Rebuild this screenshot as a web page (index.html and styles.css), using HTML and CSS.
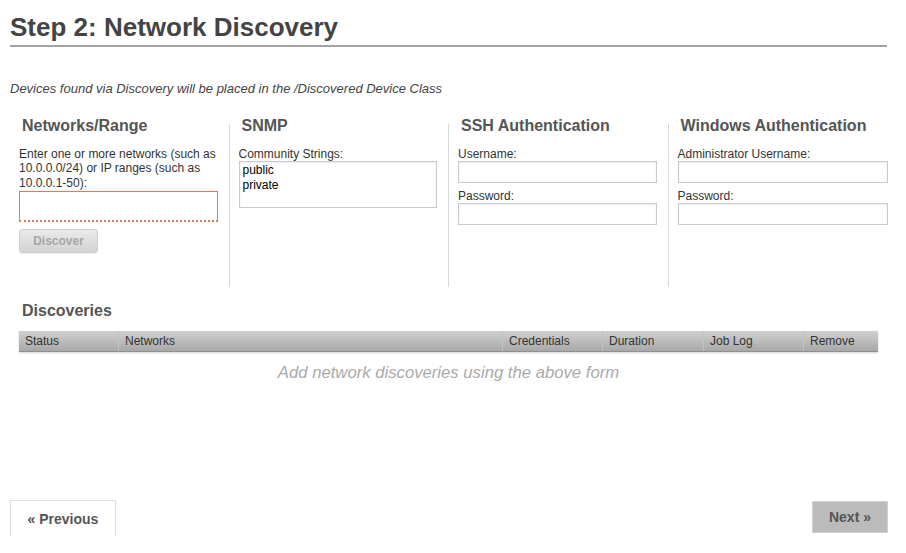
FILE: index.html
```html
<!DOCTYPE html>
<html>
<head>
<meta charset="utf-8">
<link rel="stylesheet" href="styles.css">
</head>
<body>
<div class="page">
  <h1 class="title">Step 2: Network Discovery</h1>
  <p class="intro">Devices found via Discovery will be placed in the /Discovered Device Class</p>

  <div class="columns">
    <div class="col">
      <h3 class="col-head">Networks/Range</h3>
      <label class="lbl">Enter one or more networks (such as 10.0.0.0/24) or IP ranges (such as 10.0.0.1-50):</label>
      <input class="field field-net" type="text">
      <button class="btn-discover" type="button">Discover</button>
    </div>
    <div class="col">
      <h3 class="col-head">SNMP</h3>
      <label class="lbl">Community Strings:</label>
      <textarea class="field field-area">public
private</textarea>
    </div>
    <div class="col">
      <h3 class="col-head">SSH Authentication</h3>
      <label class="lbl">Username:</label>
      <input class="field" type="text">
      <label class="lbl lbl-next">Password:</label>
      <input class="field" type="password">
    </div>
    <div class="col col-last">
      <h3 class="col-head">Windows Authentication</h3>
      <label class="lbl">Administrator Username:</label>
      <input class="field" type="text">
      <label class="lbl lbl-next">Password:</label>
      <input class="field" type="password">
    </div>
  </div>

  <div class="discoveries">
    <h3 class="col-head disc-head">Discoveries</h3>
    <div class="grid-head">
      <div class="gh-cell">Status</div>
      <div class="gh-cell">Networks</div>
      <div class="gh-cell">Credentials</div>
      <div class="gh-cell">Duration</div>
      <div class="gh-cell">Job Log</div>
      <div class="gh-cell">Remove</div>
    </div>
    <div class="empty">Add network discoveries using the above form</div>
  </div>

  <div class="footer">
    <button class="btn-prev" type="button">« Previous</button>
    <button class="btn-next" type="button">Next »</button>
  </div>
</div>
</body>
</html>
```

FILE: styles.css
```css
* { box-sizing: border-box; }

html, body {
  margin: 0;
  padding: 0;
  background: #fff;
}

body {
  font-family: "Liberation Sans", Arial, sans-serif;
  color: #333;
}

.page {
  margin-left: 10px;
  width: 878px;
}

.title {
  margin: 0;
  padding: 13px 0 3px;
  font-size: 26px;
  line-height: 29px;
  font-weight: bold;
  color: #444;
  border-bottom: 2px solid #a3a3a3;
  width: 877px;
}

.intro {
  margin: 34px 0 0;
  font-size: 13px;
  line-height: 15px;
  font-style: italic;
  color: #444;
}

.columns {
  display: grid;
  grid-template-columns: repeat(4, 219.5px);
  margin-top: 28px;
}

.col {
  height: 163px;
  padding: 0 11px 0 9px;
  border-right: 1px solid #d8d8d8;
  display: flex;
  flex-direction: column;
  align-items: stretch;
}

.col-last {
  border-right: none;
  padding-right: 0;
}

.col-head {
  margin: -8px 0 10.5px;
  padding-left: 3px;
  font-size: 16px;
  line-height: 20px;
  font-weight: bold;
  color: #555;
}

.lbl {
  display: block;
  font-size: 12px;
  line-height: 14.5px;
  color: #333;
}

.lbl-next {
  margin-top: 5.5px;
}

.field {
  display: block;
  width: 100%;
  height: 22px;
  margin: 0;
  padding: 0 4px;
  border: 1px solid #c9c9d1;
  background: #fff;
  box-shadow: inset 0 1px 2px rgba(0, 0, 0, 0.08);
  font-family: "Liberation Sans", Arial, sans-serif;
  font-size: 12px;
  color: #000;
  outline: none;
}

.field-net {
  margin-top: 1px;
  height: 31px;
  border: 1px solid #e2785c;
  border-bottom: 2px dotted #e2785c;
  box-shadow: none;
}

.field-area {
  height: 47px;
  padding: 1px 3px 0;
  line-height: 15px;
  resize: none;
  overflow: hidden;
}

.btn-discover {
  align-self: flex-start;
  margin-top: 7px;
  width: 79px;
  height: 24px;
  padding: 0;
  border: 1px solid #cfcfcf;
  border-radius: 3px;
  background: linear-gradient(#eaeaea, #d3d3d3);
  box-shadow: 0 1px 1px rgba(0, 0, 0, 0.08);
  font-family: "Liberation Sans", Arial, sans-serif;
  font-size: 12px;
  font-weight: bold;
  color: #a6a6a6;
}

.discoveries {
  padding: 0 10px 0 9px;
}

.disc-head {
  margin: 13.5px 0 10.5px;
}

.grid-head {
  display: grid;
  grid-template-columns: 99px 384px 100px 101px 100px 75px;
  height: 21px;
  background: linear-gradient(#d0d0d0, #a8a8a8);
  border-bottom: 1px solid #909090;
  box-shadow: 0 1px 2px rgba(0, 0, 0, 0.18);
}

.gh-cell {
  padding-left: 6px;
  font-size: 12px;
  line-height: 20px;
  color: #333;
  border-left: 1px solid #c2c2c2;
}

.gh-cell:first-child {
  border-left: none;
}

.empty {
  margin-top: 10.5px;
  text-align: center;
  font-size: 16.7px;
  line-height: 20px;
  font-style: italic;
  color: #aaa;
}

.footer {
  margin-top: 117.5px;
  display: flex;
  justify-content: space-between;
  align-items: flex-start;
}

.btn-prev {
  margin: 0;
  width: 106px;
  padding: 10px 0 8px;
  border: 1px solid #dedede;
  border-bottom: none;
  background: #fff;
  font-family: "Liberation Sans", Arial, sans-serif;
  font-size: 14px;
  line-height: 17px;
  font-weight: bold;
  color: #555;
  text-align: center;
}

.btn-next {
  margin: 1px 0 0;
  padding: 1px 16px 0;
  height: 32px;
  border: 1px solid #d0d0d0;
  background: #bbb;
  font-family: "Liberation Sans", Arial, sans-serif;
  font-size: 14px;
  line-height: 29px;
  font-weight: bold;
  color: #555;
}
```
